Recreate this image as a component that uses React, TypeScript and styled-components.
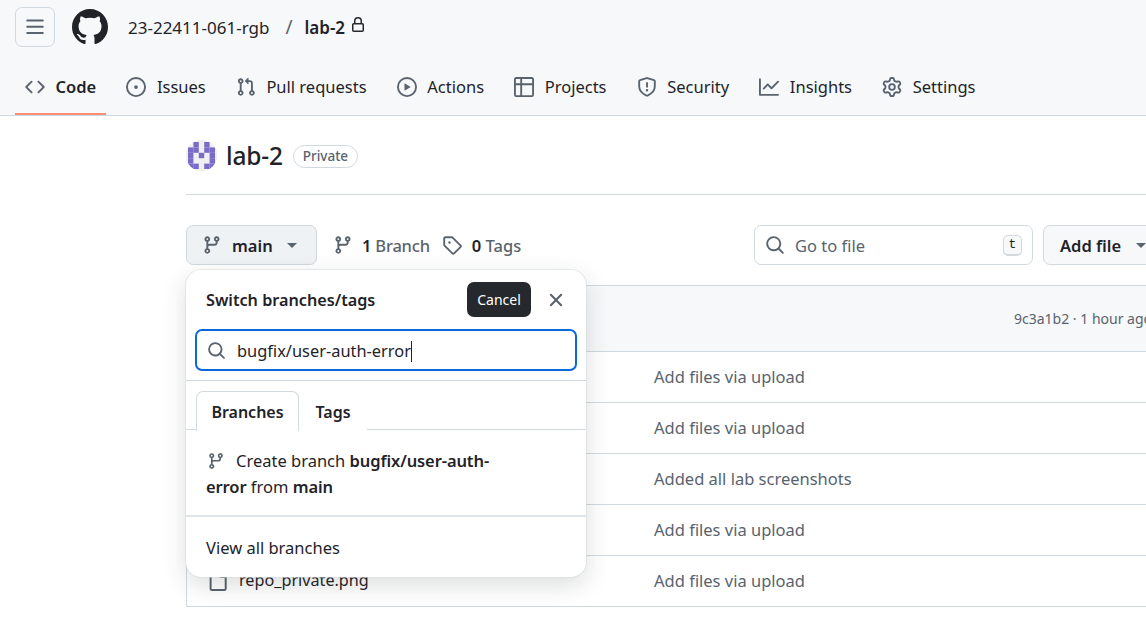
import styled, { createGlobalStyle } from "styled-components";

const GlobalStyle = createGlobalStyle`
  html, body {
    margin: 0;
    height: 100%;
    overflow: hidden;
    background: #fff;
    font-family: "Noto Sans", "Open Sans", sans-serif;
    color: #1f2328;
  }
`

const iconPaths = {
  menu: "M1 2.75A.75.75 0 0 1 1.75 2h12.5a.75.75 0 0 1 0 1.5H1.75A.75.75 0 0 1 1 2.75Zm0 5A.75.75 0 0 1 1.75 7h12.5a.75.75 0 0 1 0 1.5H1.75A.75.75 0 0 1 1 7.75ZM1.75 12h12.5a.75.75 0 0 1 0 1.5H1.75a.75.75 0 0 1 0-1.5Z",
  github: "M8 0c4.42 0 8 3.58 8 8a8.013 8.013 0 0 1-5.45 7.59c-.4.08-.55-.17-.55-.38 0-.27.01-1.13.01-2.2 0-.75-.25-1.23-.54-1.48 1.78-.2 3.65-.88 3.65-3.95 0-.88-.31-1.59-.82-2.15.08-.2.36-1.02-.08-2.12 0 0-.67-.22-2.2.82-.64-.18-1.32-.27-2-.27-.68 0-1.36.09-2 .27-1.53-1.03-2.2-.82-2.2-.82-.44 1.1-.16 1.92-.08 2.12-.51.56-.82 1.28-.82 2.15 0 3.06 1.86 3.75 3.64 3.95-.23.2-.44.55-.51 1.07-.46.21-1.61.55-2.33-.66-.15-.24-.6-.83-1.23-.82-.67.01-.27.38.01.53.34.19.73.9.82 1.13.16.45.68 1.31 2.69.94 0 .67.01 1.3.01 1.49 0 .21-.15.45-.55.38A7.995 7.995 0 0 1 0 8c0-4.42 3.58-8 8-8Z",
  code: "m11.28 3.22 4.25 4.25a.75.75 0 0 1 0 1.06l-4.25 4.25a.749.749 0 0 1-1.275-.326.749.749 0 0 1 .215-.734L13.94 8l-3.72-3.72a.749.749 0 0 1 .326-1.275.749.749 0 0 1 .734.215Zm-6.56 0a.751.751 0 0 1 1.042.018.751.751 0 0 1 .018 1.042L2.06 8l3.72 3.72a.749.749 0 0 1-.326 1.275.749.749 0 0 1-.734-.215L.47 8.53a.75.75 0 0 1 0-1.06Z",
  issue: "M8 9.5a1.5 1.5 0 1 0 0-3 1.5 1.5 0 0 0 0 3ZM8 0a8 8 0 1 1 0 16A8 8 0 0 1 8 0ZM1.5 8a6.5 6.5 0 1 0 13 0 6.5 6.5 0 0 0-13 0Z",
  pull: "M1.5 3.25a2.25 2.25 0 1 1 3 2.122v5.256a2.251 2.251 0 1 1-1.5 0V5.372A2.25 2.25 0 0 1 1.5 3.25Zm5.677-.177L9.573.677A.25.25 0 0 1 10 .854V2.5h1A2.5 2.5 0 0 1 13.5 5v5.628a2.251 2.251 0 1 1-1.5 0V5a1 1 0 0 0-1-1h-1v1.646a.25.25 0 0 1-.427.177L7.177 3.427a.25.25 0 0 1 0-.354ZM3.75 2.5a.75.75 0 1 0 0 1.5.75.75 0 0 0 0-1.5Zm0 9.5a.75.75 0 1 0 0 1.5.75.75 0 0 0 0-1.5Zm8.25.75a.75.75 0 1 0 1.5 0 .75.75 0 0 0-1.5 0Z",
  play: "M8 0a8 8 0 1 1 0 16A8 8 0 0 1 8 0ZM1.5 8a6.5 6.5 0 1 0 13 0 6.5 6.5 0 0 0-13 0Zm4.879-2.773 4.264 2.559a.25.25 0 0 1 0 .428l-4.264 2.559A.25.25 0 0 1 6 10.559V5.442a.25.25 0 0 1 .379-.215Z",
  table: "M0 1.75C0 .784.784 0 1.75 0h12.5C15.216 0 16 .784 16 1.75v12.5A1.75 1.75 0 0 1 14.25 16H1.75A1.75 1.75 0 0 1 0 14.25ZM6.5 6.5v8h7.75a.25.25 0 0 0 .25-.25V6.5Zm8-1.5V1.75a.25.25 0 0 0-.25-.25H6.5V5Zm-13 1.5v7.75c0 .138.112.25.25.25H5v-8ZM5 5V1.5H1.75a.25.25 0 0 0-.25.25V5Z",
  shield: "M7.467.133a1.748 1.748 0 0 1 1.066 0l5.25 1.68A1.75 1.75 0 0 1 15 3.48V7c0 1.566-.32 3.182-1.303 4.682-.983 1.498-2.585 2.813-5.032 3.855a1.697 1.697 0 0 1-1.33 0c-2.447-1.042-4.049-2.357-5.032-3.855C1.32 10.182 1 8.566 1 7V3.48a1.75 1.75 0 0 1 1.217-1.667Zm.61 1.429a.25.25 0 0 0-.153 0l-5.25 1.68a.25.25 0 0 0-.174.238V7c0 1.358.275 2.666 1.057 3.86.784 1.194 2.121 2.34 4.366 3.297a.196.196 0 0 0 .154 0c2.245-.956 3.582-2.104 4.366-3.298C13.225 9.666 13.5 8.36 13.5 7V3.48a.251.251 0 0 0-.174-.237l-5.25-1.68ZM8.75 4.75v3a.75.75 0 0 1-1.5 0v-3a.75.75 0 0 1 1.5 0ZM9 10.5a1 1 0 1 1-2 0 1 1 0 0 1 2 0Z",
  graph: "M1.5 1.75V13.5h13.75a.75.75 0 0 1 0 1.5H.75a.75.75 0 0 1-.75-.75V1.75a.75.75 0 0 1 1.5 0Zm14.28 2.53-5.25 5.25a.75.75 0 0 1-1.06 0L7 7.06 4.28 9.78a.751.751 0 0 1-1.042-.018.751.751 0 0 1-.018-1.042l3.25-3.25a.75.75 0 0 1 1.06 0L10 7.94l4.72-4.72a.751.751 0 0 1 1.042.018.751.751 0 0 1 .018 1.042Z",
  gear: "M8 0a8.2 8.2 0 0 1 .701.031C9.444.095 9.99.645 10.16 1.29l.288 1.107c.018.066.079.158.212.224.231.114.454.243.668.386.123.082.233.09.299.071l1.103-.303c.644-.176 1.392.021 1.82.63.27.385.506.792.704 1.218.315.675.111 1.422-.364 1.891l-.814.806c-.049.048-.098.147-.088.294.016.257.016.515 0 .772-.01.147.038.246.088.294l.814.806c.475.469.679 1.216.364 1.891a7.977 7.977 0 0 1-.704 1.217c-.428.61-1.176.807-1.82.63l-1.102-.302c-.067-.019-.177-.011-.3.071a5.909 5.909 0 0 1-.668.386c-.133.066-.194.158-.211.224l-.29 1.106c-.168.646-.715 1.196-1.458 1.26a8.006 8.006 0 0 1-1.402 0c-.743-.064-1.289-.614-1.458-1.26l-.289-1.106c-.018-.066-.079-.158-.212-.224a5.738 5.738 0 0 1-.668-.386c-.123-.082-.233-.09-.299-.071l-1.103.303c-.644.176-1.392-.021-1.82-.63a8.12 8.12 0 0 1-.704-1.218c-.315-.675-.111-1.422.363-1.891l.815-.806c.05-.048.098-.147.088-.294a6.214 6.214 0 0 1 0-.772c.01-.147-.038-.246-.088-.294l-.815-.806C.635 6.045.431 5.298.746 4.623a7.92 7.92 0 0 1 .704-1.217c.428-.61 1.176-.807 1.82-.63l1.102.302c.067.019.177.011.3-.071.214-.143.437-.272.668-.386.133-.066.194-.158.211-.224l.29-1.106C6.009.645 6.556.095 7.299.03 7.53.01 7.764 0 8 0Zm-.571 1.525c-.036.003-.108.036-.137.146l-.289 1.105c-.147.561-.549.967-.998 1.189-.173.086-.34.183-.5.29-.417.278-.97.423-1.529.27l-1.103-.303c-.109-.03-.175.016-.195.045-.22.312-.412.644-.573.99-.014.031-.021.11.059.19l.815.806c.411.406.562.957.53 1.456a4.709 4.709 0 0 0 0 .582c.032.499-.119 1.05-.53 1.456l-.815.806c-.081.08-.073.159-.059.19.162.346.353.677.573.989.02.03.085.076.195.046l1.102-.303c.56-.153 1.113-.008 1.53.27.161.107.328.204.501.29.447.222.85.629.997 1.189l.289 1.105c.029.109.101.143.137.146a6.6 6.6 0 0 0 1.142 0c.036-.003.108-.036.137-.146l.289-1.105c.147-.561.549-.967.998-1.189.173-.086.34-.183.5-.29.417-.278.97-.423 1.529-.27l1.103.303c.109.029.175-.016.195-.045.22-.313.411-.644.573-.99.014-.031.021-.11-.059-.19l-.815-.806c-.411-.406-.562-.957-.53-1.456a4.709 4.709 0 0 0 0-.582c-.032-.499.119-1.05.53-1.456l.815-.806c.081-.08.073-.159.059-.19a6.464 6.464 0 0 0-.573-.989c-.02-.03-.085-.076-.195-.046l-1.102.303c-.56.153-1.113.008-1.53-.27a4.44 4.44 0 0 0-.501-.29c-.447-.222-.85-.629-.997-1.189l-.289-1.105c-.029-.11-.101-.143-.137-.146a6.6 6.6 0 0 0-1.142 0ZM11 8a3 3 0 1 1-6 0 3 3 0 0 1 6 0ZM9.5 8a1.5 1.5 0 1 0-3.001.001A1.5 1.5 0 0 0 9.5 8Z",
  branch: "M9.5 3.25a2.25 2.25 0 1 1 3 2.122V6A2.5 2.5 0 0 1 10 8.5H6a1 1 0 0 0-1 1v1.128a2.251 2.251 0 1 1-1.5 0V5.372a2.25 2.25 0 1 1 1.5 0v1.836A2.493 2.493 0 0 1 6 7h4a1 1 0 0 0 1-1v-.628A2.25 2.25 0 0 1 9.5 3.25Zm-6 0a.75.75 0 1 0 1.5 0 .75.75 0 0 0-1.5 0Zm8.25-.75a.75.75 0 1 0 0 1.5.75.75 0 0 0 0-1.5ZM4.25 12a.75.75 0 1 0 0 1.5.75.75 0 0 0 0-1.5Z",
  tag: "M1 7.775V2.75C1 1.784 1.784 1 2.75 1h5.025c.464 0 .91.184 1.238.513l6.25 6.25a1.75 1.75 0 0 1 0 2.474l-5.026 5.026a1.75 1.75 0 0 1-2.474 0l-6.25-6.25A1.752 1.752 0 0 1 1 7.775Zm1.5 0c0 .066.026.13.073.177l6.25 6.25a.25.25 0 0 0 .354 0l5.025-5.025a.25.25 0 0 0 0-.354l-6.25-6.25a.25.25 0 0 0-.177-.073H2.75a.25.25 0 0 0-.25.25ZM6 5a1 1 0 1 1 0 2 1 1 0 0 1 0-2Z",
  lock: "M4 4a4 4 0 0 1 8 0v2h.25c.966 0 1.75.784 1.75 1.75v5.5A1.75 1.75 0 0 1 12.25 15h-8.5A1.75 1.75 0 0 1 2 13.25v-5.5C2 6.784 2.784 6 3.75 6H4Zm8.25 3.5h-8.5a.25.25 0 0 0-.25.25v5.5c0 .138.112.25.25.25h8.5a.25.25 0 0 0 .25-.25v-5.5a.25.25 0 0 0-.25-.25ZM10.5 6V4a2.5 2.5 0 1 0-5 0v2Z",
  search: "M10.68 11.74a6 6 0 0 1-7.922-8.982 6 6 0 0 1 8.982 7.922l3.04 3.04a.749.749 0 0 1-.326 1.275.749.749 0 0 1-.734-.215ZM11.5 7a4.499 4.499 0 1 0-8.997 0A4.499 4.499 0 0 0 11.5 7Z",
  x: "M3.72 3.72a.75.75 0 0 1 1.06 0L8 6.94l3.22-3.22a.749.749 0 0 1 1.275.326.749.749 0 0 1-.215.734L9.06 8l3.22 3.22a.749.749 0 0 1-.326 1.275.749.749 0 0 1-.734-.215L8 9.06l-3.22 3.22a.751.751 0 0 1-1.042-.018.751.751 0 0 1-.018-1.042L6.94 8 3.72 4.78a.75.75 0 0 1 0-1.06Z",
  file: "M2 1.75C2 .784 2.784 0 3.75 0h6.586c.464 0 .909.184 1.237.513l2.914 2.914c.329.328.513.773.513 1.237v9.586A1.75 1.75 0 0 1 13.25 16h-9.5A1.75 1.75 0 0 1 2 14.25Zm1.75-.25a.25.25 0 0 0-.25.25v12.5c0 .138.112.25.25.25h9.5a.25.25 0 0 0 .25-.25V6h-2.75A1.75 1.75 0 0 1 9 4.25V1.5Zm6.75.062V4.25c0 .138.112.25.25.25h2.688l-.011-.013-2.914-2.914-.013-.011Z",
}

type IconName = keyof typeof iconPaths

const IconSvg = styled.svg<{ $color: string }>`
  flex: none;
  fill: ${(p) => p.$color};
`

const Octicon = ({ name, size, color = "#59636e" }: { name: IconName; size: number; color?: string }) => (
  <IconSvg width={size} height={size} viewBox="0 0 16 16" $color={color}>
    <path d={iconPaths[name]} />
  </IconSvg>
)

const Page = styled.div`
  width: 1146px;
  height: 622px;
  overflow: hidden;
`

const Header = styled.header`
  height: 116px;
  box-sizing: border-box;
  background: #f6f8fa;
  border-bottom: 1px solid #d1d9e0;
  padding: 7px 0 0 15px;
`

const TopBar = styled.div`
  display: flex;
  align-items: center;
  height: 40px;
`

const MenuButton = styled.div`
  width: 40px;
  height: 40px;
  box-sizing: border-box;
  border: 1px solid #d1d9e0;
  border-radius: 7px;
  display: flex;
  justify-content: center;
  align-items: center;
  margin-right: 17px;
`

const Owner = styled.span`
  font-size: 17px;
  margin-left: 20px;
`

const Slash = styled.span`
  font-size: 19px;
  color: #59636e;
  margin: 0 12px 0 16px;
`

const RepoName = styled.span`
  font-size: 17px;
  font-weight: 600;
  margin-right: 5px;
`

const LockWrap = styled.span`
  display: flex;
  margin-bottom: 5px;
`

const TabBar = styled.nav`
  display: flex;
  gap: 10.2px;
  margin-top: 13px;
`

const Tab = styled.div<{ $active?: boolean }>`
  height: 55px;
  box-sizing: border-box;
  padding: 0 10px;
  display: flex;
  align-items: center;
  gap: 10.5px;
  font-size: 16.5px;
  font-weight: ${(p) => (p.$active ? 600 : 400)};
  border-bottom: 2px solid ${(p) => (p.$active ? "#fd8c73" : "transparent")};
`

const Main = styled.main`
  width: 1176px;
  box-sizing: border-box;
  padding-left: 186px;
  position: relative;
`

const TitleRow = styled.div`
  height: 79px;
  box-sizing: border-box;
  padding-top: 24px;
  display: flex;
  align-items: flex-start;
  border-bottom: 1px solid #d1d9e0;
`

const Avatar = styled.svg`
  width: 31px;
  height: 31px;
  border-radius: 50%;
  margin-right: 9px;
  box-shadow: inset 0 0 0 1px rgba(31, 35, 40, 0.1);
`

const RepoTitle = styled.h1`
  margin: 0 10px 0 0;
  font-size: 24.5px;
  font-weight: 500;
  line-height: 32px;
  letter-spacing: -0.2px;
`

const PrivateBadge = styled.span`
  margin-top: 5px;
  height: 23px;
  box-sizing: border-box;
  border: 1px solid #d1d9e0;
  border-radius: 12px;
  padding: 0 9px;
  font-size: 13.5px;
  font-weight: 500;
  line-height: 21px;
  color: #59636e;
`

const Toolbar = styled.div`
  display: flex;
  align-items: center;
  height: 40px;
  margin-top: 30px;
`

const BranchButton = styled.div`
  width: 131px;
  height: 40px;
  box-sizing: border-box;
  background: #eff2f5;
  border: 1px solid #d1d9e0;
  border-radius: 7px;
  padding-left: 15px;
  display: flex;
  align-items: center;
  font-size: 16.5px;
  font-weight: 600;
`

const BranchLabel = styled.span`
  margin: 0 14px 0 10px;
`

const Caret = styled.i`
  width: 0;
  height: 0;
  border-left: 5px solid transparent;
  border-right: 5px solid transparent;
  border-top: 5px solid #59636e;
`

const CountLink = styled.div`
  display: flex;
  align-items: center;
  gap: 10px;
  font-size: 16.5px;
  font-weight: 500;
  color: #59636e;
  margin-left: 12px;
  b {
    color: #1f2328;
    font-weight: 600;
  }
`

const BranchCount = styled(CountLink)`
  gap: 9px;
  letter-spacing: -0.2px;
  margin-left: 16px;
`

const FileSearch = styled.div`
  width: 279px;
  height: 40px;
  box-sizing: border-box;
  margin-left: auto;
  border: 1px solid #d1d9e0;
  border-radius: 7px;
  padding: 0 10px;
  display: flex;
  align-items: center;
  gap: 10px;
  font-size: 16.5px;
  color: #59636e;
`

const Kbd = styled.kbd`
  margin-left: auto;
  width: 19px;
  height: 21px;
  box-sizing: border-box;
  background: #f6f8fa;
  border: 1px solid #d1d9e0;
  border-bottom-width: 2px;
  border-radius: 5px;
  font-family: "Liberation Mono", monospace;
  font-size: 13px;
  line-height: 18px;
  text-align: center;
  color: #1f2328;
`

const AddFile = styled.div`
  width: 133px;
  height: 40px;
  box-sizing: border-box;
  margin-left: 10px;
  background: #f6f8fa;
  border: 1px solid #d1d9e0;
  border-radius: 7px;
  padding-left: 16px;
  display: flex;
  align-items: center;
  gap: 15px;
  font-size: 16.5px;
  font-weight: 600;
`

const FileTable = styled.section`
  margin: 20px 0 0;
  border-left: 1px solid #d1d9e0;
  border-top: 1px solid #d1d9e0;
`

const TableHead = styled.div`
  height: 66px;
  box-sizing: border-box;
  background: #f6f8fa;
  border-bottom: 1px solid #d1d9e0;
  padding-left: 827px;
  display: flex;
  align-items: center;
  font-size: 14px;
  color: #59636e;
  white-space: nowrap;
`

const FileRow = styled.div`
  height: 51px;
  box-sizing: border-box;
  border-bottom: 1px solid #d1d9e0;
  padding-bottom: 2px;
  display: grid;
  grid-template-columns: 467px 1fr;
  align-items: center;
  font-size: 16.5px;
`

const FileName = styled.div`
  display: flex;
  align-items: center;
  gap: 11px;
  padding-left: 20px;
  font-size: 16.2px;
`

const CommitMessage = styled.div`
  color: #59636e;
`

const Popover = styled.div`
  position: absolute;
  left: 186px;
  top: 154px;
  width: 400px;
  height: 307px;
  box-sizing: border-box;
  background: #fff;
  border-radius: 15px;
  box-shadow: 0 0 0 1px rgba(209, 217, 224, 0.5), 0 8px 24px rgba(37, 41, 46, 0.16);
  display: flex;
  flex-direction: column;
`

const PopHead = styled.div`
  display: flex;
  align-items: center;
  height: 35px;
  margin-top: 12px;
  padding-left: 20px;
`

const PopTitle = styled.span`
  font-size: 16.2px;
  font-weight: 600;
`

const CancelButton = styled.span`
  margin-left: auto;
  width: 64px;
  height: 35px;
  background: #25292e;
  border-radius: 7px;
  color: #fff;
  font-size: 14px;
  line-height: 35px;
  text-align: center;
`

const CloseIcon = styled.span`
  display: flex;
  margin: 0 19px 0 14px;
`

const SearchInput = styled.div`
  margin: 12px 9px 0;
  height: 42px;
  box-sizing: border-box;
  border: 2px solid #0969da;
  border-radius: 7px;
  padding-left: 10px;
  display: flex;
  align-items: center;
  gap: 11px;
  font-size: 16.4px;
  color: #1f2328;
`

const TextCaret = styled.i`
  display: inline-block;
  width: 1px;
  height: 21px;
  background: #1f2328;
  vertical-align: -5px;
`

const PopTabs = styled.div`
  margin-top: 9px;
  border-top: 1px solid #d1d9e0;
  padding: 10px 0 0 10px;
  height: 50px;
  box-sizing: border-box;
  display: flex;
  border-bottom: 1px solid #d1d9e0;
`

const PopTab = styled.div<{ $active?: boolean }>`
  height: 40px;
  box-sizing: border-box;
  text-align: center;
  line-height: 41px;
  font-size: 16px;
  font-weight: 600;
  border: 1px solid ${(p) => (p.$active ? "#d1d9e0" : "transparent")};
  border-bottom: 0;
  border-radius: 7px 7px 0 0;
  background: #fff;
  width: ${(p) => (p.$active ? "103px" : "68px")};
`

const CreateBranch = styled.div`
  height: 87px;
  box-sizing: border-box;
  padding: 18px 90px 0 20px;
  font-size: 16.5px;
  line-height: 26px;
  color: #1f2328;
  border-bottom: 2px solid #e0e5ea;
  b {
    font-weight: 600;
    letter-spacing: -0.1px;
  }
`

const BranchGlyph = styled.span`
  margin: 0 11px 0 1px;
  svg {
    vertical-align: -3px;
  }
`

const ViewAll = styled.div`
  padding-left: 20px;
  flex: 1;
  display: flex;
  align-items: center;
  font-size: 16.5px;
`

const tabs: { label: string; icon: IconName; active?: boolean }[] = [
  { label: "Code", icon: "code", active: true },
  { label: "Issues", icon: "issue" },
  { label: "Pull requests", icon: "pull" },
  { label: "Actions", icon: "play" },
  { label: "Projects", icon: "table" },
  { label: "Security", icon: "shield" },
  { label: "Insights", icon: "graph" },
  { label: "Settings", icon: "gear" },
]

const rows = [
  { message: "Add files via upload" },
  { message: "Add files via upload" },
  { message: "Added all lab screenshots" },
  { message: "Add files via upload" },
  { name: "repo_private.png", message: "Add files via upload" },
]

const identicon = [".X.X.", "XX.XX", "X.X.X", "X...X", "XX.XX"]

const App = () => {
  return (
    <Page>
      <GlobalStyle />
      <Header>
        <TopBar>
          <MenuButton>
            <Octicon name="menu" size={20} />
          </MenuButton>
          <Octicon name="github" size={36} color="#1f2328" />
          <Owner>23-22411-061-rgb</Owner>
          <Slash>/</Slash>
          <RepoName>lab-2</RepoName>
          <LockWrap>
            <Octicon name="lock" size={16} color="#25292e" />
          </LockWrap>
        </TopBar>
        <TabBar>
          {tabs.map(({ label, icon, active }) => (
            <Tab key={label} $active={active}>
              <Octicon name={icon} size={20} />
              {label}
            </Tab>
          ))}
        </TabBar>
      </Header>
      <Main>
        <TitleRow>
          <Avatar viewBox="0 0 31 31">
            <rect width="31" height="31" fill="#f0f0f0" />
            {identicon.map((row, y) =>
              row.split("").map((cell, x) =>
                cell === "X" ? (
                  <rect key={`${x}-${y}`} x={2 + x * 5.4} y={2 + y * 5.4} width="5.4" height="5.4" fill="#7b6bc9" />
                ) : null
              )
            )}
          </Avatar>
          <RepoTitle>lab-2</RepoTitle>
          <PrivateBadge>Private</PrivateBadge>
        </TitleRow>
        <Toolbar>
          <BranchButton>
            <Octicon name="branch" size={20} />
            <BranchLabel>main</BranchLabel>
            <Caret />
          </BranchButton>
          <BranchCount>
            <Octicon name="branch" size={20} />
            <span><b>1</b> Branch</span>
          </BranchCount>
          <CountLink>
            <Octicon name="tag" size={20} />
            <span><b>0</b> Tags</span>
          </CountLink>
          <FileSearch>
            <Octicon name="search" size={20} />
            Go to file
            <Kbd>t</Kbd>
          </FileSearch>
          <AddFile>
            Add file
            <Caret />
          </AddFile>
        </Toolbar>
        <FileTable>
          <TableHead>9c3a1b2 · 1 hour ago</TableHead>
          {rows.map((row, i) => (
            <FileRow key={i}>
              <FileName>
                {row.name && <Octicon name="file" size={21} />}
                {row.name}
              </FileName>
              <CommitMessage>{row.message}</CommitMessage>
            </FileRow>
          ))}
        </FileTable>
        <Popover>
          <PopHead>
            <PopTitle>Switch branches/tags</PopTitle>
            <CancelButton>Cancel</CancelButton>
            <CloseIcon>
              <Octicon name="x" size={22} />
            </CloseIcon>
          </PopHead>
          <SearchInput>
            <Octicon name="search" size={19} />
            <span>bugfix/user-auth-error<TextCaret /></span>
          </SearchInput>
          <PopTabs>
            <PopTab $active>Branches</PopTab>
            <PopTab>Tags</PopTab>
          </PopTabs>
          <CreateBranch>
            <BranchGlyph>
              <Octicon name="branch" size={18} />
            </BranchGlyph>
            Create branch <b>bugfix/user-auth-error</b> from <b>main</b>
          </CreateBranch>
          <ViewAll>View all branches</ViewAll>
        </Popover>
      </Main>
    </Page>
  )
}

export default App
